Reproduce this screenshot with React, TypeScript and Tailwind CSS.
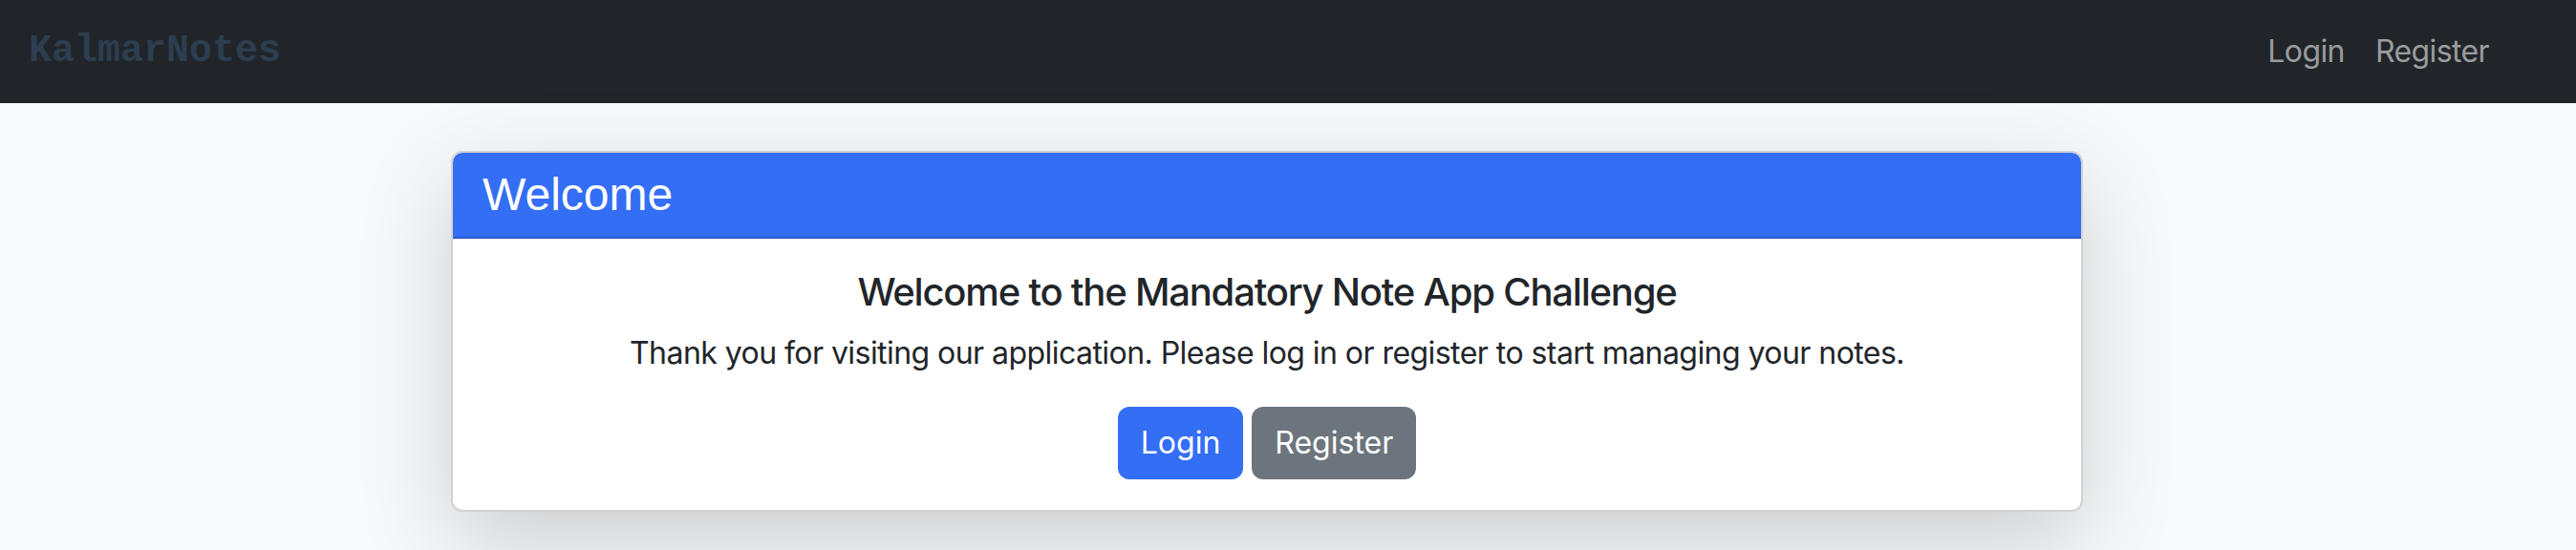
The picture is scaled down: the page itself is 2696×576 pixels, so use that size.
const sans = "font-['Inter','Noto_Sans',sans-serif]";

function Navbar() {
  return (
    <nav className="flex h-[108px] items-center justify-between bg-[#212529] pl-[30px] pr-[75px]">
      <a className="font-['Liberation_Mono','Courier_New',monospace] text-[40px] font-bold leading-none text-[#2c3e50]">
        KalmarNotes
      </a>
      <div className={`flex items-center text-[32px] leading-[48px] tracking-[-0.6px] text-[#9a9c9e] ${sans}`}>
        <a className="px-4">Login</a>
        <a className="px-4">Register</a>
      </div>
    </nav>
  );
}

function WelcomeCard() {
  return (
    <div className="ml-[472px] w-[1708px] overflow-hidden rounded-[12px] border-2 border-[rgba(0,0,0,0.175)] bg-white shadow-[0_32px_96px_rgba(0,0,0,0.175)]">
      <div className="border-b-2 border-[rgba(0,0,0,0.175)] bg-[#336ef4] px-[31px] py-4">
        <h4 className="font-['Liberation_Sans','Arial',sans-serif] text-[48px] leading-[56px] text-white">Welcome</h4>
      </div>
      <div className={`flex flex-col items-center p-8 text-[#212529] ${sans}`}>
        <h5 className="mb-4 text-[40px] font-medium leading-[48px] tracking-[-1.2px]">
          Welcome to the Mandatory Note App Challenge
        </h5>
        <p className="mb-8 text-[32px] leading-[48px] tracking-[-0.55px]">
          Thank you for visiting our application. Please log in or register to start managing your notes.
        </p>
        <div className="flex gap-[9px]">
          <button className="h-[76px] rounded-[12px] bg-[#336ef4] px-6 text-[32px] text-white">Login</button>
          <button className="h-[76px] rounded-[12px] bg-[#6c757d] px-6 text-[32px] text-white">Register</button>
        </div>
      </div>
    </div>
  );
}

export default function App() {
  return (
    <div className="h-[576px] overflow-hidden bg-[#f8f9fa]">
      <Navbar />
      <main className="pt-[50px]">
        <WelcomeCard />
      </main>
    </div>
  );
}
